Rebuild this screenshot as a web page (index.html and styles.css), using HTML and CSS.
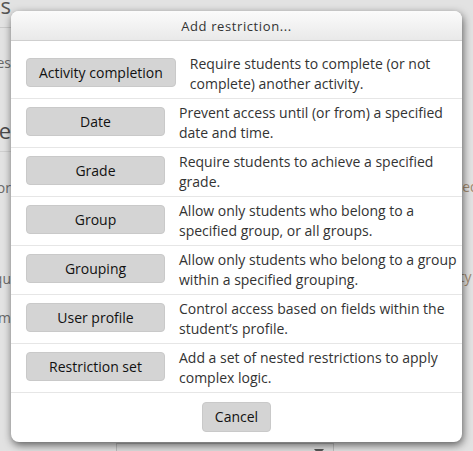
FILE: index.html
```html
<!DOCTYPE html>
<html lang="en">
<head>
<meta charset="utf-8">
<title>Add restriction</title>
<link rel="stylesheet" href="styles.css">
</head>
<body>
<div class="page">
  <div class="bg">
    <div class="bg-left">
      <div class="bg-h1">Restrict access</div>
      <div class="bg-t bg-t1">Restriction types</div>
      <div class="bg-h2">Module</div>
      <div class="bg-t bg-t2">Appear or</div>
      <div class="bg-t bg-t3">Require qu</div>
      <div class="bg-t bg-t4">Custom</div>
    </div>
    <div class="bg-mid"></div>
    <div class="bg-right">
      <div class="bg-link bg-r1">Completed</div>
      <div class="bg-link bg-r2">Activity</div>
    </div>
  </div>
  <div class="bg-bottom">
    <div class="bg-select"><span class="bg-arrow"></span></div>
  </div>

  <div class="dialog" role="dialog" aria-label="Add restriction...">
    <div class="dialog-header">Add restriction...</div>
    <div class="dialog-body">
      <div class="option">
        <button class="btn" type="button">Activity completion</button>
        <div class="desc">Require students to complete (or not complete) another activity.</div>
      </div>
      <div class="option">
        <button class="btn" type="button">Date</button>
        <div class="desc">Prevent access until (or from) a specified date and time.</div>
      </div>
      <div class="option">
        <button class="btn" type="button">Grade</button>
        <div class="desc">Require students to achieve a specified grade.</div>
      </div>
      <div class="option">
        <button class="btn" type="button">Group</button>
        <div class="desc">Allow only students who belong to a specified group, or all groups.</div>
      </div>
      <div class="option">
        <button class="btn" type="button">Grouping</button>
        <div class="desc">Allow only students who belong to a group within a specified grouping.</div>
      </div>
      <div class="option">
        <button class="btn" type="button">User profile</button>
        <div class="desc">Control access based on fields within the student’s profile.</div>
      </div>
      <div class="option">
        <button class="btn" type="button">Restriction set</button>
        <div class="desc">Add a set of nested restrictions to apply complex logic.</div>
      </div>
    </div>
    <div class="dialog-footer">
      <button class="btn btn-cancel" type="button">Cancel</button>
    </div>
  </div>
</div>
</body>
</html>
```

FILE: styles.css
```css
html, body {
  margin: 0;
  padding: 0;
}

body {
  font-family: "Open Sans", "Liberation Sans", sans-serif;
  background: #e2e2e2;
}

.page {
  position: relative;
  width: 473px;
  height: 451px;
  overflow: hidden;
  background: #e2e2e2;
}

/* ---------- background page (behind the modal overlay) ---------- */
.bg {
  display: flex;
  height: 441px;
}

.bg-left {
  width: 11px;
  overflow: hidden;
  display: flex;
  flex-direction: column;
  color: #6a6a6a;
}

.bg-left > div {
  white-space: nowrap;
  display: flex;
  justify-content: flex-end;
}

.bg-h1 {
  font-size: 22px;
  line-height: 28px;
  margin-top: -9px;
  padding-bottom: 8px;
  border-bottom: 1px solid #c9c9c9;
  color: #555;
}

.bg-t {
  font-size: 14px;
  line-height: 20px;
}

.bg-t1 { margin-top: 25px; }

.bg-h2 {
  font-size: 22px;
  line-height: 28px;
  margin-top: 43px;
  padding-bottom: 7px;
  border-bottom: 1px solid #cfcfcf;
  color: #4a4a4a;
}

.bg-t2 { margin-top: 26px; }
.bg-t3 { margin-top: 71px; }
.bg-t4 { margin-top: 19px; }

.bg-mid {
  flex: 1;
}

.bg-right {
  width: 11px;
  overflow: hidden;
  display: flex;
  flex-direction: column;
}

.bg-link {
  font-size: 14px;
  line-height: 20px;
  white-space: nowrap;
  color: #a08a72;
  text-indent: -55px;
}

.bg-r1 { margin-top: 177px; }
.bg-r2 { margin-top: 70px; text-indent: -37px; }

.bg-bottom {
  height: 10px;
  display: flex;
  padding-left: 116px;
}

.bg-select {
  width: 216px;
  height: 14px;
  margin-top: 2px;
  border: 1px solid #bdbdbd;
  background: #dedede;
  position: relative;
}

.bg-arrow {
  position: absolute;
  right: 9px;
  top: 5px;
  width: 0;
  height: 0;
  border-left: 5px solid transparent;
  border-right: 5px solid transparent;
  border-top: 6px solid #555;
}

/* ---------- dialog ---------- */
.dialog {
  position: absolute;
  left: 11px;
  top: 11px;
  width: 451px;
  background: #fff;
  border-radius: 8px;
  box-shadow: 1px 3px 9px rgba(0, 0, 0, 0.6);
  overflow: hidden;
}

.dialog-header {
  height: 30px;
  box-sizing: border-box;
  padding-top: 1px;
  border-bottom: 1px solid #cfcfcf;
  background: linear-gradient(#fbfbfb, #e9e9e9);
  display: flex;
  align-items: center;
  justify-content: center;
  font-size: 13px;
  letter-spacing: 0.6px;
  color: #333;
}

.dialog-body {
  padding-top: 9px;
}

.option {
  display: flex;
  align-items: flex-start;
  gap: 14px;
  padding: 4px 0 4px 15px;
  border-bottom: 1px solid #e6e6e6;
}

.btn {
  font-family: "Open Sans", "Liberation Sans", sans-serif;
  font-size: 14px;
  line-height: 20px;
  color: #111;
  background: #d4d4d4;
  border: 1px solid #c9c9c9;
  border-radius: 4px;
  height: 29px;
  padding: 0 12px;
  margin-top: 4px;
  min-width: 139px;
  flex-shrink: 0;
  box-sizing: border-box;
  cursor: pointer;
}

.desc {
  flex: 1;
  font-size: 14px;
  line-height: 20px;
  color: #333;
  padding-right: 2px;
}

.dialog-footer {
  display: flex;
  justify-content: center;
  padding: 9px 0 10px;
}

.btn-cancel {
  min-width: 0;
  width: 69px;
  height: 30px;
  margin-top: 0;
  padding: 0;
}
```
